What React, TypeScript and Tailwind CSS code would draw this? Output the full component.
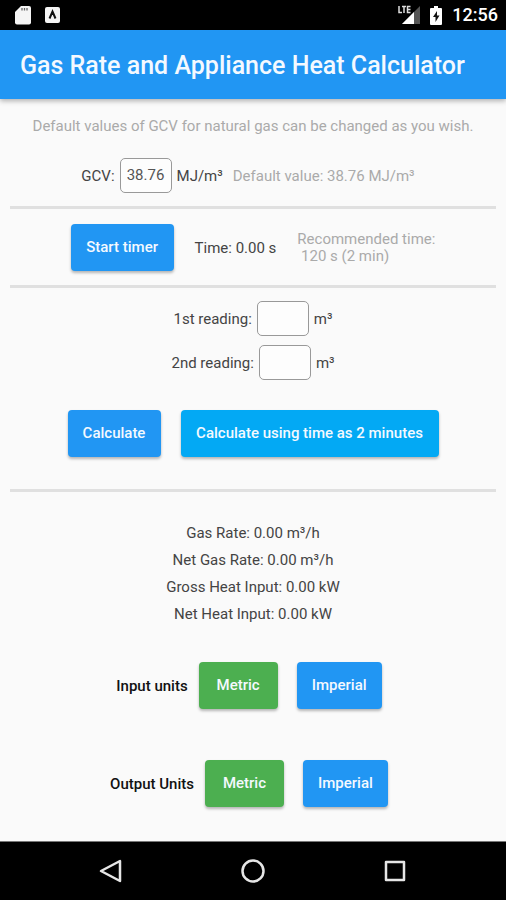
import { useState } from "react";

type Unit = "Metric" | "Imperial";

const raised =
  "h-[47px] rounded pb-0.5 text-[15px] font-medium text-[#f4f9ff] shadow-[0_2px_3px_rgba(0,0,0,0.28)]";
const field =
  "h-[35px] w-[52px] rounded-[5px] border border-[#999] bg-[#fdfdfd] pb-0.5 text-center text-[15px] text-[#555] outline-none";

function StatusBar() {
  return (
    <div className="flex h-[30px] items-center justify-between bg-black pr-2 pl-[15px] text-white">
      <div className="flex items-center gap-[14px]">
        <svg width="16" height="20" viewBox="0 0 16 20" aria-hidden="true">
          <path d="M6 1h8a2 2 0 0 1 2 2v14.500a2 2 0 0 1-2 2H2a2 2 0 0 1-2-2V7z" fill="#f5f5f5" />
          <path d="M7 3v2.500M9.500 3v2.500M12 3v2.500" stroke="#666" strokeWidth="1.300" />
        </svg>
        <svg width="15" height="16" viewBox="0 0 15 16" aria-hidden="true">
          <rect width="15" height="16" rx="2" fill="#f5f5f5" />
          <path d="M4.500 11.500 7.500 4.500l3 7M7.500 5v3" fill="none" stroke="#111" strokeWidth="2" />
        </svg>
      </div>
      <div className="flex items-center gap-[10px]">
        <svg width="22" height="20" viewBox="0 0 22 20" aria-hidden="true">
          <path d="M22 1v18H4z" fill="#555" />
          <path d="M16 7v12H4z" fill="#fff" />
          <path d="M0 0h13v9H0z" fill="#000" />
          <path d="M1 1v6.500h3M4 1.500h4M6 1.500V8M12.500 1.500H9.500v6h3M9.500 4.500h3" fill="none" stroke="#ddd" strokeWidth="1.500" />
        </svg>
        <svg width="12" height="19" viewBox="0 0 12 19" aria-hidden="true">
          <path d="M4 0h4v2h3a1 1 0 0 1 1 1v15a1 1 0 0 1-1 1H1a1 1 0 0 1-1-1V3a1 1 0 0 1 1-1h3z" fill="#fff" />
          <path d="M7 5 3 11h2.500v5l4-6.500H7z" fill="#111" />
        </svg>
        <span className="text-lg font-medium">12:56</span>
      </div>
    </div>
  );
}

function Reading({ id, label }: { id: string; label: string }) {
  return (
    <div className="flex items-center justify-center gap-[5px]">
      <label htmlFor={id}>{label}</label>
      <input id={id} inputMode="decimal" className={field} />
      <span>m³</span>
    </div>
  );
}

function UnitRow({ label }: { label: string }) {
  const [unit, setUnit] = useState<Unit>("Metric");
  return (
    <div role="group" aria-label={label} className="flex items-center justify-center pr-2">
      <span className="mr-[11px] font-medium text-[#111]">{label}</span>
      <button
        type="button"
        onClick={() => setUnit("Metric")}
        className={`${raised} w-[79px] ${unit === "Metric" ? "bg-[#4caf50]" : "bg-[#2196f3]"}`}
      >
        Metric
      </button>
      <button
        type="button"
        onClick={() => setUnit("Imperial")}
        className={`${raised} ml-[19px] w-[85px] ${unit === "Imperial" ? "bg-[#4caf50]" : "bg-[#2196f3]"}`}
      >
        Imperial
      </button>
    </div>
  );
}

const divider = "mx-[10px] h-[3px] border-0 bg-[#e0e0e0]";

export default function App() {
  const [gcv, setGcv] = useState("38.76");
  return (
    <div className="flex min-h-screen flex-col bg-[#fafafa] font-['Roboto',sans-serif] text-[15px] leading-6 text-[#444]">
      <StatusBar />
      <header className="z-10 flex h-[69px] items-center bg-[#2196f3] px-5 pt-0.5 shadow-[0_2px_5px_rgba(0,0,0,0.3)]">
        <h1 className="text-[25px] font-medium whitespace-nowrap text-[#f4f9ff]">
          Gas Rate and Appliance Heat Calculator
        </h1>
      </header>
      <main className="flex-1">
        <p className="mt-[15px] text-center text-[#aaa]">
          Default values of GCV for natural gas can be changed as you wish.
        </p>
        <div className="mt-5 flex items-center justify-center gap-[5px] pr-[10px]">
          <label htmlFor="gcv">GCV:</label>
          <input id="gcv" inputMode="decimal" value={gcv} onChange={(e) => setGcv(e.target.value)} className={field} />
          <span>MJ/m³</span>
          <span className="ml-[5px] text-[#aaa]">Default value: 38.76 MJ/m³</span>
        </div>
        <hr className={`${divider} mt-[13px]`} />
        <div className="mt-[15px] flex items-center justify-center gap-[21px]">
          <button type="button" className={`${raised} w-[103px] bg-[#2196f3]`}>Start timer</button>
          <span>Time: 0.00 s</span>
          <p className="leading-[17px] whitespace-pre text-[#aaa]">{"Recommended time:\n 120 s (2 min)"}</p>
        </div>
        <hr className={`${divider} mt-[14px]`} />
        <div className="mt-[13px] flex flex-col gap-[9px]">
          <Reading id="first" label="1st reading:" />
          <Reading id="second" label="2nd reading:" />
        </div>
        <div className="mt-[30px] flex justify-center gap-5">
          <button type="button" className={`${raised} w-[93px] bg-[#2196f3]`}>Calculate</button>
          <button type="button" className={`${raised} w-[258px] bg-[#03a9f4]`}>Calculate using time as 2 minutes</button>
        </div>
        <hr className={`${divider} mt-8`} />
        <div className="mt-[28px] text-center leading-[27px]">
          <p>Gas Rate: 0.00 m³/h</p>
          <p>Net Gas Rate: 0.00 m³/h</p>
          <p>Gross Heat Input: 0.00 kW</p>
          <p>Net Heat Input: 0.00 kW</p>
        </div>
        <div className="mt-[34px] mb-[34px] flex flex-col gap-[51px]">
          <UnitRow label="Input units" />
          <UnitRow label="Output Units" />
        </div>
      </main>
      <nav aria-label="System" className="grid h-[59px] grid-cols-3 border-t border-[#777] bg-black px-[40px]">
        <button type="button" aria-label="Back" className="flex items-center justify-center">
          <svg width="26" height="26" viewBox="0 0 26 26" fill="none" stroke="#e6e6e6" strokeWidth="2.500" strokeLinejoin="round" aria-hidden="true">
            <path d="M22 3v20L3 13z" />
          </svg>
        </button>
        <button type="button" aria-label="Home" className="flex items-center justify-center">
          <svg width="26" height="26" viewBox="0 0 26 26" fill="none" stroke="#e6e6e6" strokeWidth="2.500" aria-hidden="true">
            <circle cx="13" cy="13" r="10.500" />
          </svg>
        </button>
        <button type="button" aria-label="Recent apps" className="flex items-center justify-center">
          <svg width="26" height="26" viewBox="0 0 26 26" fill="none" stroke="#e6e6e6" strokeWidth="2.500" strokeLinejoin="round" aria-hidden="true">
            <rect x="4" y="4" width="18" height="18" />
          </svg>
        </button>
      </nav>
    </div>
  );
}
